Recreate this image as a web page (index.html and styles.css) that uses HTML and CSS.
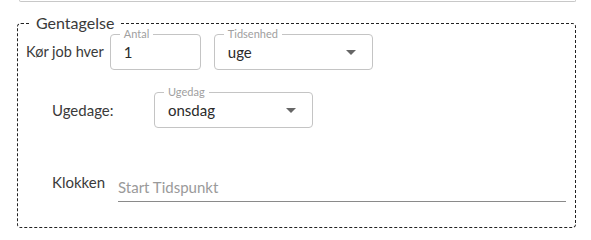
FILE: index.html
```html
<!doctype html>
<html lang="da">
    <head>
        <meta charset="UTF-8" />
        <meta name="viewport" content="width=device-width, initial-scale=1.0" />
        <title>Gentagelse</title>
        <link rel="stylesheet" href="styles.css">
    </head>
    <body>
        <div class="top-field"></div>

        <fieldset class="repeat">
            <legend>Gentagelse</legend>

            <div class="row row-every">
                <span class="row-label">Kør job hver</span>
                <div class="outlined field-count">
                    <span class="float-label">Antal</span>
                    <span class="value">1</span>
                </div>
                <div class="outlined select field-unit">
                    <span class="float-label">Tidsenhed</span>
                    <span class="value">uge</span>
                    <span class="arrow"></span>
                </div>
            </div>

            <div class="row row-days">
                <span class="row-label wide">Ugedage:</span>
                <div class="outlined select field-day">
                    <span class="float-label">Ugedag</span>
                    <span class="value">onsdag</span>
                    <span class="arrow"></span>
                </div>
            </div>

            <div class="row row-time">
                <span class="row-label time-label">Klokken</span>
                <div class="underlined">
                    <span class="placeholder">Start Tidspunkt</span>
                </div>
            </div>
        </fieldset>
    </body>
</html>
```

FILE: styles.css
```css
* {
    margin: 0;
    padding: 0;
    box-sizing: border-box;
}

body {
    font-family: Lato, "Noto Sans", sans-serif;
    color: #333;
    background: white;
}

.top-field {
    height: 2px;
    margin: 0 15px 0 19px;
    border: 1px solid #c8c8c8;
    border-top: none;
    border-radius: 0 0 4px 4px;
}

.repeat {
    margin: 12px 15px 0 17px;
    padding: 2px 8px 25px 8px;
    border: 1px dashed #222;
    border-radius: 4px;
}

.repeat legend {
    margin-left: 5px;
    padding: 0 5px;
    font-size: 16px;
    line-height: 18px;
    color: #3a3a3a;
}

.row {
    display: flex;
    align-items: center;
}

.row-label {
    font-size: 15px;
    line-height: 20px;
    color: #3a3a3a;
}

.row-every .row-label {
    font-size: 14.5px;
    margin-right: 6px;
}

.row-days {
    margin-top: 22px;
}

.row-label.wide {
    margin-left: 26px;
    width: 102px;
}

.outlined {
    position: relative;
    height: 36px;
    border: 1px solid #c4c4c4;
    border-radius: 4px;
    display: flex;
    align-items: center;
    padding: 0 13px;
}

.float-label {
    position: absolute;
    top: -7px;
    left: 9px;
    padding: 0 4px;
    background: white;
    font-size: 11px;
    line-height: 12px;
    color: #a0a0a0;
}

.value {
    font-size: 15px;
    color: #2a2a2a;
}

.field-count {
    width: 91px;
    margin-right: 13px;
}

.field-unit,
.field-day {
    width: 159px;
}

.select .arrow {
    margin-left: auto;
    margin-right: 3px;
    width: 0;
    height: 0;
    border-left: 5px solid transparent;
    border-right: 5px solid transparent;
    border-top: 5px solid #666;
}

.row-time {
    margin-top: 44px;
    align-items: flex-start;
}

.time-label {
    margin-left: 26px;
    width: 66px;
}

.underlined {
    flex: 1;
    margin-right: 1px;
    padding: 5px 0 4px;
    border-bottom: 1px solid #8a8a8a;
}

.placeholder {
    display: block;
    font-size: 15px;
    line-height: 20px;
    color: #9a9a9a;
}
```
